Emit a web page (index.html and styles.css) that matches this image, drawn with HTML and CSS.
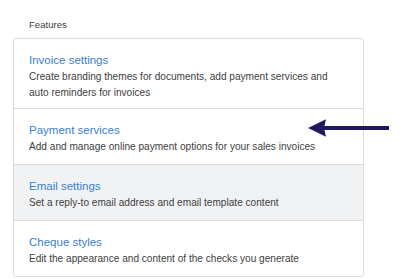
FILE: index.html
```html
<!DOCTYPE html>
<html lang="en">
<head>
    <meta charset="UTF-8">
    <meta name="viewport" content="width=device-width, initial-scale=1.0">
    <title>Features</title>
    <link rel="stylesheet" href="styles.css">
</head>
<body>
    <div class="page">
        <div class="section-title">Features</div>

        <div class="feature-list">
            <a class="feature" href="#">
                <div class="feature-name">Invoice settings</div>
                <div class="feature-desc">Create branding themes for documents, add payment services and auto reminders for invoices</div>
            </a>

            <a class="feature feature-highlight" href="#">
                <div class="feature-name">Payment services</div>
                <div class="feature-desc">Add and manage online payment options for your sales invoices</div>
                <svg class="pointer" width="82" height="18" viewBox="0 0 82 18" aria-hidden="true">
                    <path d="M0 9 L18 0.3 L16 9 L18 17.7 Z" fill="#1e1a5c"/>
                    <rect x="16" y="7" width="65" height="4" fill="#1e1a5c"/>
                </svg>
            </a>

            <a class="feature feature-hover" href="#">
                <div class="feature-name">Email settings</div>
                <div class="feature-desc">Set a reply-to email address and email template content</div>
            </a>

            <a class="feature" href="#">
                <div class="feature-name">Cheque styles</div>
                <div class="feature-desc">Edit the appearance and content of the checks you generate</div>
            </a>
        </div>
    </div>
</body>
</html>
```

FILE: styles.css
```css
:root {
    --link-color: #3a80cc;
    --text-color: #404040;
    --border-color: #dadbdd;
    --hover-bg: #f1f2f4;
    --arrow-color: #1e1a5c;
}

body {
    font-family: 'Liberation Sans', Arial, Helvetica, sans-serif;
    margin: 0;
    padding: 0;
    background-color: white;
    color: var(--text-color);
}

.page {
    padding: 19px 52px 0 13px;
}

.section-title {
    font-size: 9.6px;
    line-height: 12px;
    color: #3c3c3c;
    padding-left: 16px;
    margin-bottom: 7px;
}

.feature-list {
    border: 1px solid var(--border-color);
    border-radius: 3px;
}

.feature {
    display: block;
    padding: 13px 34px 9px 15px;
    text-decoration: none;
    border-top: 1px solid var(--border-color);
    position: relative;
}

.feature:first-child {
    border-top: none;
    padding-bottom: 7px;
}

.feature-hover {
    background-color: var(--hover-bg);
}

.feature-name {
    font-size: 11.5px;
    line-height: 17px;
    color: var(--link-color);
}

.feature-desc {
    font-size: 10.1px;
    line-height: 16px;
    color: var(--text-color);
}

.pointer {
    position: absolute;
    top: 10px;
    left: 294px;
}
```
